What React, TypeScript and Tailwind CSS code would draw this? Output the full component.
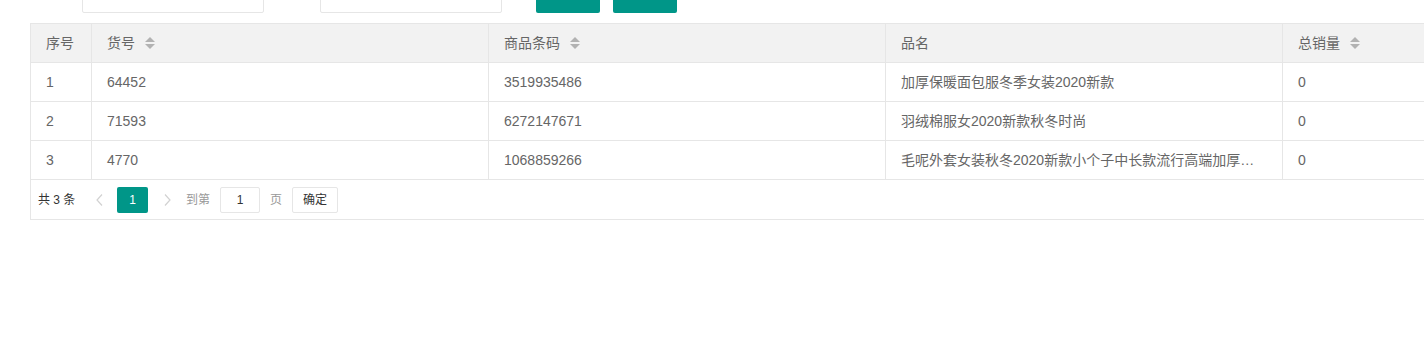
import React from "react";

const font = { fontFamily: '"Liberation Sans", "Noto Sans CJK SC", sans-serif' };

function SortIcon() {
  return (
    <svg width="10" height="12" viewBox="0 0 10 12" className="ml-[10px] shrink-0">
      <polygon points="0,5 5,0 10,5" fill="#b2b2b2" />
      <polygon points="0,7 10,7 5,12" fill="#b2b2b2" />
    </svg>
  );
}

const rows = [
  { no: "1", sku: "64452", code: "3519935486", name: "加厚保暖面包服冬季女装2020新款", sales: "0" },
  { no: "2", sku: "71593", code: "6272147671", name: "羽绒棉服女2020新款秋冬时尚", sales: "0" },
  { no: "3", sku: "4770", code: "1068859266", name: "毛呢外套女装秋冬2020新款小个子中长款流行高端加厚呢子大衣", sales: "0" },
];

export default function App() {
  return (
    <div className="w-full h-[352px] overflow-hidden bg-white text-[14px] text-[#666]" style={font}>
      {/* form row (scrolled partially off top) */}
      <div className="flex mt-[-25px] h-[38px]">
        <div className="ml-[82px] w-[182px] h-[38px] border border-[#e6e6e6] rounded-[2px] bg-white" />
        <div className="ml-[56px] w-[182px] h-[38px] border border-[#e6e6e6] rounded-[2px] bg-white" />
        <div className="ml-[34px] w-[64px] h-[38px] rounded-[2px] bg-[#009688]" />
        <div className="ml-[13px] w-[64px] h-[38px] rounded-[2px] bg-[#009688]" />
      </div>

      {/* table */}
      <div className="ml-[30px] mt-[10px] w-[1700px] border border-[#e6e6e6]">
        <div className="flex h-[39px] bg-[#f2f2f2] border-b border-[#e6e6e6]">
          <div className="w-[60px] shrink-0 pl-[15px] flex items-center">序号</div>
          <div className="w-[397px] shrink-0 border-l border-[#e6e6e6] pl-[15px] flex items-center">
            <span>货号</span>
            <SortIcon />
          </div>
          <div className="w-[397px] shrink-0 border-l border-[#e6e6e6] pl-[15px] flex items-center">
            <span>商品条码</span>
            <SortIcon />
          </div>
          <div className="w-[397px] shrink-0 border-l border-[#e6e6e6] pl-[15px] flex items-center">
            <span>品名</span>
          </div>
          <div className="w-[397px] shrink-0 border-l border-[#e6e6e6] pl-[15px] flex items-center">
            <span>总销量</span>
            <SortIcon />
          </div>
        </div>
        {rows.map((r) => (
          <div key={r.no} className="flex h-[39px] border-b border-[#e6e6e6]">
            <div className="w-[60px] shrink-0 pl-[15px] flex items-center">{r.no}</div>
            <div className="w-[397px] shrink-0 border-l border-[#e6e6e6] pl-[15px] flex items-center">{r.sku}</div>
            <div className="w-[397px] shrink-0 border-l border-[#e6e6e6] pl-[15px] flex items-center">{r.code}</div>
            <div className="w-[397px] shrink-0 border-l border-[#e6e6e6] pl-[15px] flex items-center">
              <span className="block w-[360px] truncate">{r.name}</span>
            </div>
            <div className="w-[397px] shrink-0 border-l border-[#e6e6e6] pl-[15px] flex items-center">{r.sales}</div>
          </div>
        ))}
        {/* pagination */}
        <div className="h-[39px] pt-[7px] pl-[7px] text-[12px]">
          <div className="flex items-center h-[26px]">
            <span className="w-[48px] text-[#333]">共 3 条</span>
            <span className="w-[26px] flex justify-center">
              <svg width="7" height="12" viewBox="0 0 7 12">
                <polyline points="6,0.5 1,6 6,11.5" fill="none" stroke="#d2d2d2" strokeWidth="1.2" />
              </svg>
            </span>
            <span className="ml-[5px] w-[31px] h-[26px] rounded-[2px] bg-[#009688] text-white flex items-center justify-center">1</span>
            <span className="ml-[6px] w-[26px] flex justify-center">
              <svg width="7" height="12" viewBox="0 0 7 12">
                <polyline points="1,0.5 6,6 1,11.5" fill="none" stroke="#d2d2d2" strokeWidth="1.2" />
              </svg>
            </span>
            <span className="ml-[6px] w-[24px] text-[#999] whitespace-nowrap">到第</span>
            <span className="ml-[10px] w-[40px] h-[26px] border border-[#e6e6e6] rounded-[2px] flex items-center justify-center text-[#333]">1</span>
            <span className="ml-[10px] w-[12px] text-[#999]">页</span>
            <span className="ml-[10px] w-[46px] h-[26px] border border-[#e6e6e6] rounded-[2px] bg-white flex items-center justify-center text-[#333]">确定</span>
          </div>
        </div>
      </div>
    </div>
  );
}
